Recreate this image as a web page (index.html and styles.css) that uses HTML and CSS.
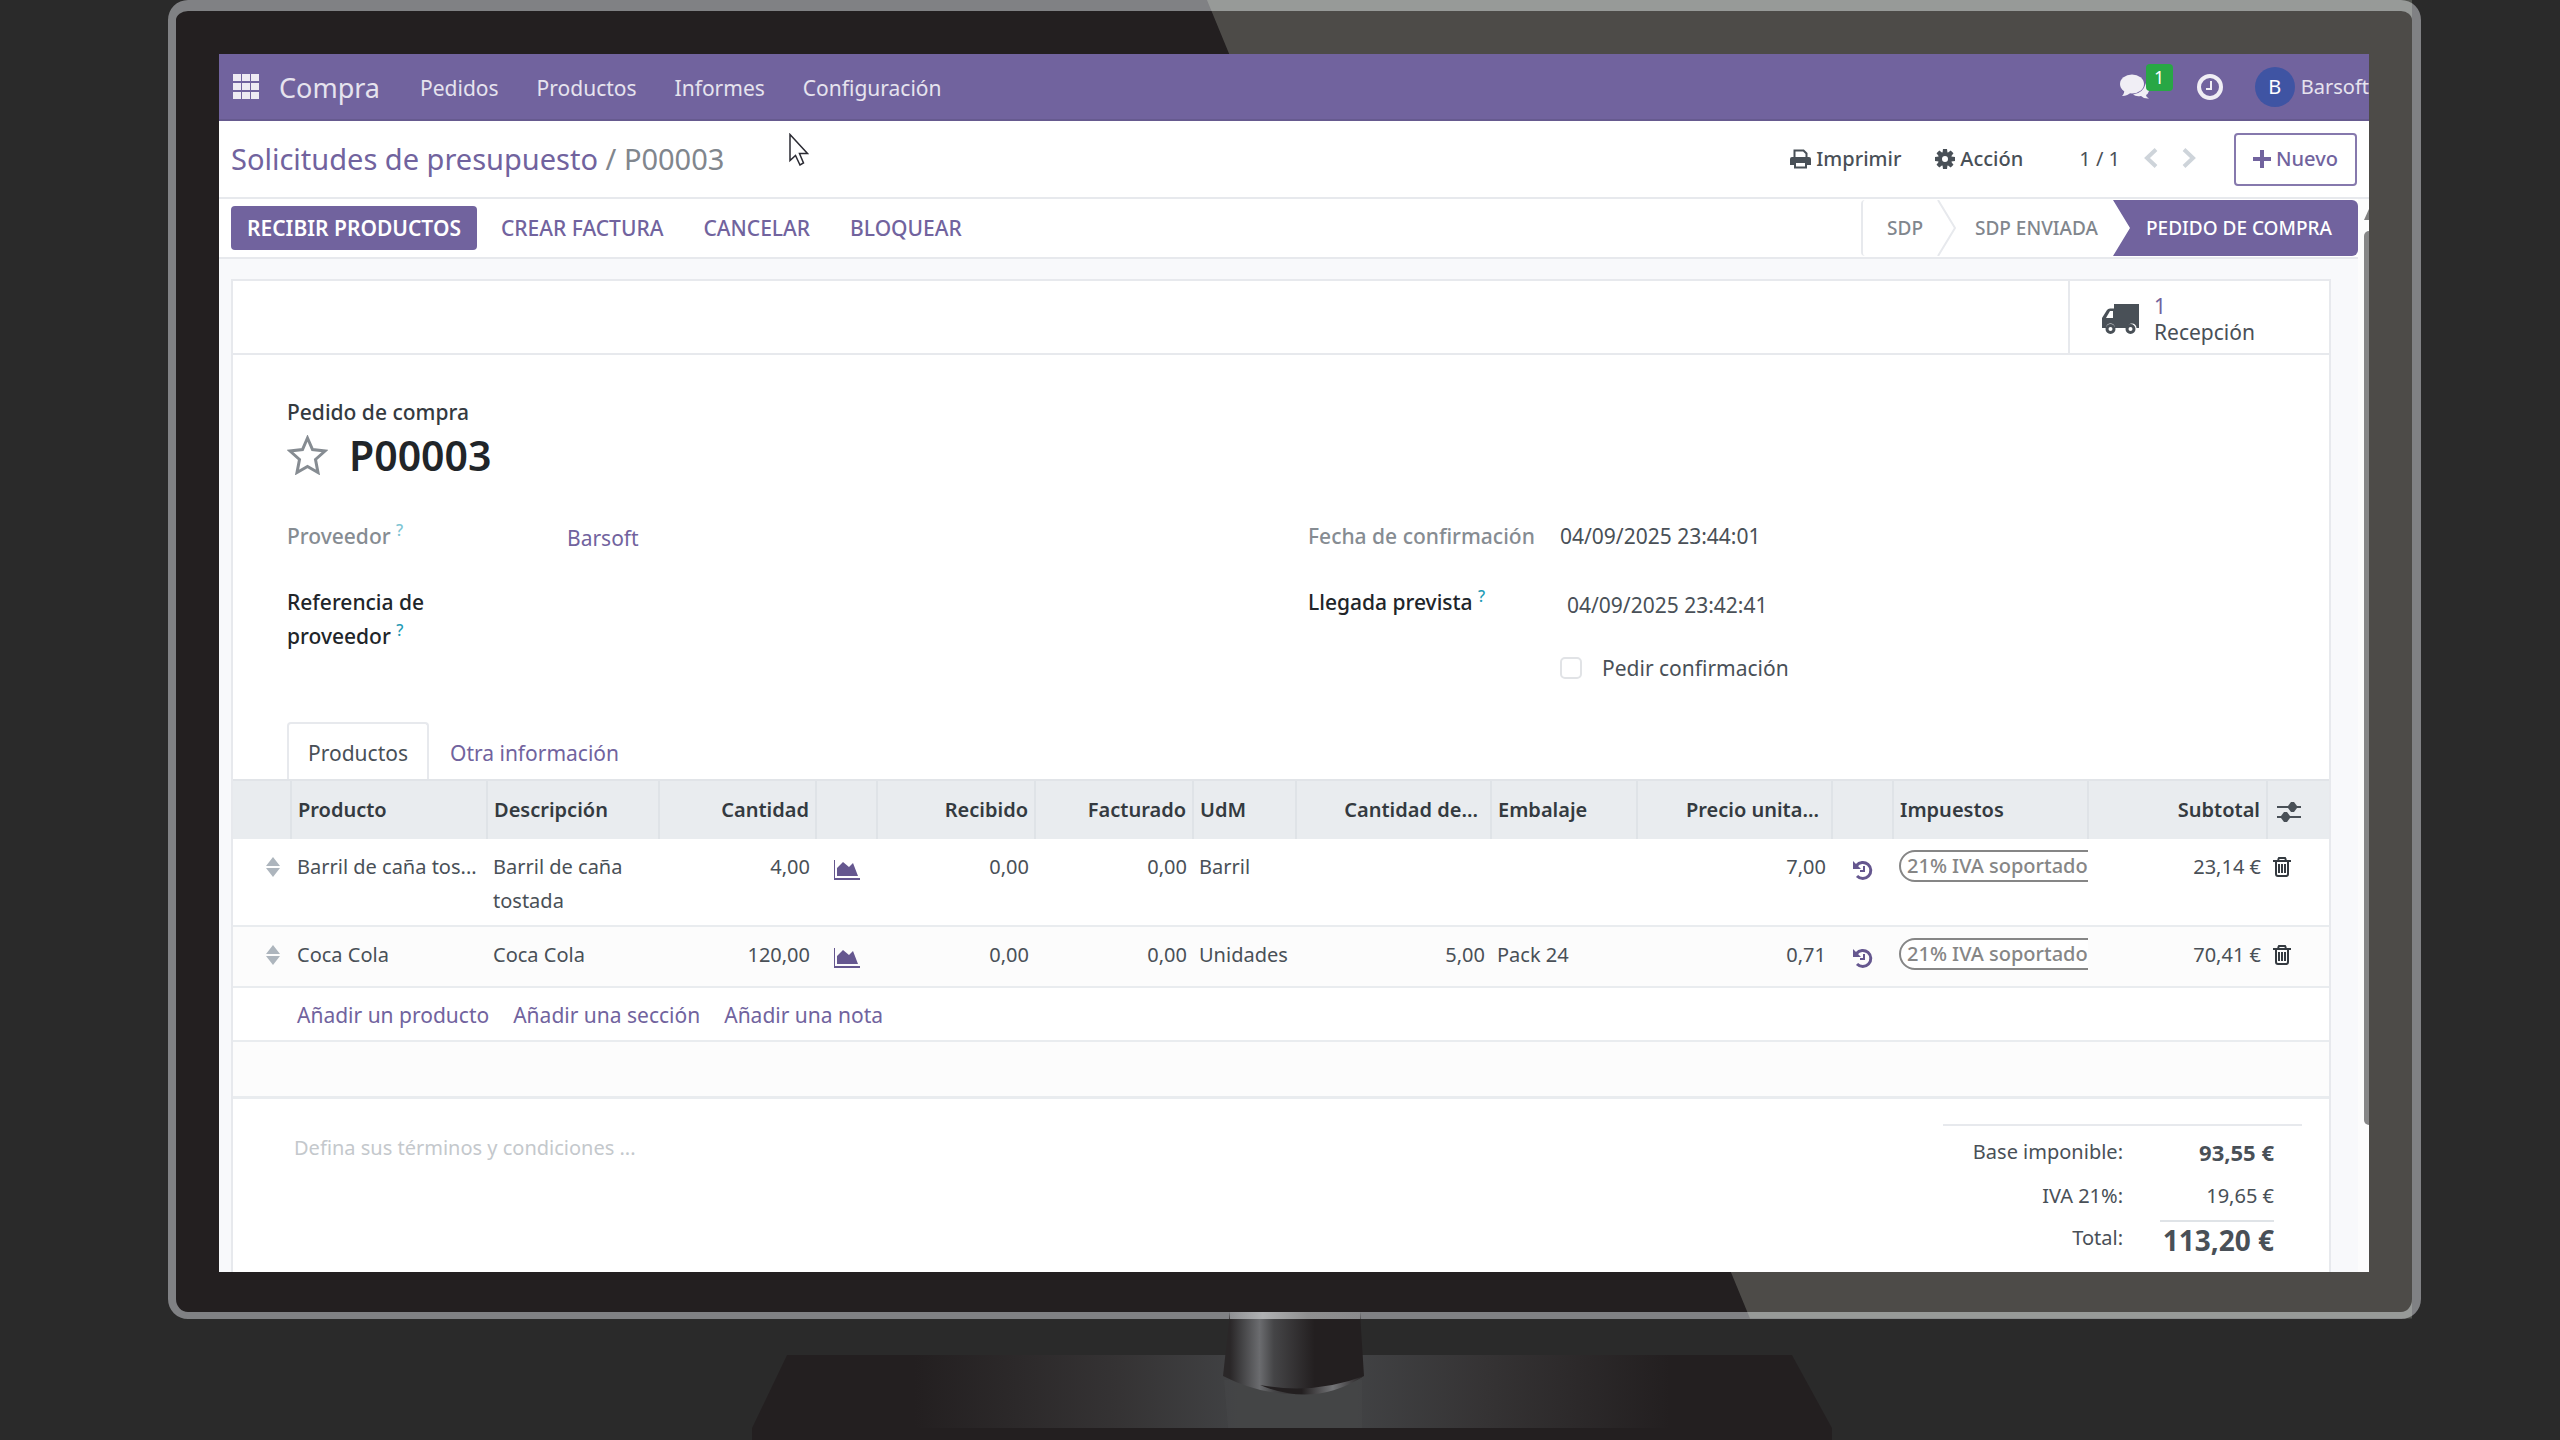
FILE: index.html
```html
<!DOCTYPE html>
<html lang="es">
<head>
<meta charset="utf-8">
<meta name="viewport" content="width=device-width, initial-scale=1">
<title>Compra - P00003</title>
<link rel="stylesheet" href="styles.css">
</head>
<body>
<svg class="sprite" aria-hidden="true">
  <symbol id="i-sort" viewBox="0 0 14 20"><path d="M7 0l7 9H0zM0 11h14l-7 9z"/></symbol>
  <symbol id="i-chart" viewBox="0 0 26 20"><path d="M0 0h1v18h25v2H0z"/><path d="M3 16V8l6-6 6 5 4-4 5 13z"/></symbol>
  <symbol id="i-history" viewBox="0 0 20 20"><path d="M3.500 5.500A8 8 0 1 1 4 16" fill="none" stroke="currentColor" stroke-width="3"/><path d="M0 1v8h8z"/><path d="M11 6v5H7" fill="none" stroke="currentColor" stroke-width="2"/></symbol>
  <symbol id="i-trash" viewBox="0 0 18 20"><path d="M5 3l1-2h6l1 2M0 4h18M3 5v12q0 2 2 2h8q2 0 2-2V5M6 7v9M9 7v9M12 7v9" fill="none" stroke="currentColor" stroke-width="2"/></symbol>
</svg>
<main class="stage">
  <div class="monitor">
    <div class="screen">
      <header class="navbar">
        <button class="apps" type="button" aria-label="Aplicaciones"><svg width="26" height="25" viewBox="0 0 26 25"><path fill="#eeebf3" d="M0 0h8v7H0zM9 0h8v7H9zM18 0h8v7h-8zM0 9h8v7H0zM9 9h8v7H9zM18 9h8v7h-8zM0 18h8v7H0zM9 18h8v7H9zM18 18h8v7h-8z"/></svg></button>
        <a class="brand" href="#">Compra</a>
        <nav class="menu"><a href="#">Pedidos</a><a href="#">Productos</a><a href="#">Informes</a><a href="#">Configuración</a></nav>
        <div class="systray">
          <button type="button" class="chat" aria-label="Conversaciones"><svg width="30" height="25" viewBox="0 0 30 25"><g fill="#f0eef5"><ellipse cx="12" cy="10" rx="12" ry="9.500"/><path d="M4 15q1 4-2 7 6 0 9-4z"/><path d="M26 9q4 3 3 8-1 3-3 4 0 2 3 3.500-5 .5-8-2.500-5 1-8-1.500 10-1 13-11.500z"/></g></svg><span class="count">1</span></button>
          <button type="button" class="clock" aria-label="Actividades"><svg width="26" height="26" viewBox="0 0 26 26" fill="none" stroke="#f0eef5"><circle cx="13" cy="13" r="11" stroke-width="4"/><path d="M14 7v8H9" stroke-width="2"/></svg></button>
          <button type="button" class="user"><span class="avatar">B</span><span>Barsoft</span></button>
        </div>
      </header>
      <div class="control">
        <div class="crumbs"><a href="#">Solicitudes de presupuesto</a><span> / </span><span>P00003</span></div>
        <div class="tools">
          <button type="button" class="tool"><svg width="21" height="20" viewBox="0 0 21 20"><path d="M4.500 9V1.500h9l3 3V9" fill="none" stroke="#495057" stroke-width="2"/><path fill="#495057" d="M2 8h17q2 0 2 2v6h-4v3.500H4V16H0v-6q0-2 2-2z"/><path fill="#fff" d="M6 14h9v3.500H6z"/></svg>Imprimir</button>
          <button type="button" class="tool"><svg width="20" height="20" viewBox="-10 -10 20 20"><g fill="#495057"><path d="M-2-10h4l.5 4h-5zM-2 10h4l.5-4h-5zM-10-2v4l4 .5v-5zM10-2v4l-4 .5v-5z"/><path transform="rotate(45)" d="M-2-10h4l.5 4h-5zM-2 10h4l.5-4h-5zM-10-2v4l4 .5v-5zM10-2v4l-4 .5v-5z"/></g><circle r="5" fill="none" stroke="#495057" stroke-width="4"/></svg>Acción</button>
          <span class="pager">1 / 1</span>
          <button type="button" class="arrow" aria-label="Anterior"><svg width="14" height="20" viewBox="0 0 14 20"><path d="M12 1.500L3 10l9 8.500" fill="none" stroke="#ced4da" stroke-width="4"/></svg></button>
          <button type="button" class="arrow" aria-label="Siguiente"><svg width="14" height="20" viewBox="0 0 14 20"><path d="M2 1.500L11 10l-9 8.500" fill="none" stroke="#ced4da" stroke-width="4"/></svg></button>
          <button type="button" class="new"><svg width="18" height="18" viewBox="0 0 18 18"><path fill="#71639e" d="M7 0h4v7h7v4h-7v7H7v-7H0V7h7z"/></svg>Nuevo</button>
        </div>
      </div>
      <div class="content">
        <div class="form">
          <div class="statusbar">
            <div class="actions">
              <button type="button" class="primary">RECIBIR PRODUCTOS</button>
              <button type="button">CREAR FACTURA</button>
              <button type="button">CANCELAR</button>
              <button type="button">BLOQUEAR</button>
            </div>
            <div class="steps">
              <button type="button" class="step">SDP</button>
              <svg class="sep" width="19" height="56" viewBox="0 0 19 56"><path d="M1 0l17 28L1 56" fill="none" stroke="#e7e9ed" stroke-width="2"/></svg>
              <button type="button" class="step">SDP ENVIADA</button>
              <button type="button" class="step current">PEDIDO DE COMPRA</button>
            </div>
          </div>
          <div class="sheet-bg">
            <section class="sheet">
              <div class="button-box">
                <button type="button" class="stat"><svg width="37" height="30" viewBox="0 0 37 30"><path fill="#495057" d="M12 0h25v24h-2.500a4.500 4.500 0 0 0-9 0H13a4.500 4.500 0 0 0-9 0H0V14l5-8q1-1.500 3-1.500h4z"/><path fill="#fff" d="M4 14l4-7h3v7z"/><g fill="#fff" stroke="#495057" stroke-width="3"><circle cx="8.500" cy="25" r="3.500"/><circle cx="28.500" cy="25" r="3.500"/></g></svg><span class="stat-text"><span class="stat-value">1</span><span>Recepción</span></span></button>
              </div>
              <div class="sheet-body">
                <p class="kind">Pedido de compra</p>
                <div class="title"><button type="button" aria-label="Prioridad"><svg width="41" height="40" viewBox="0 0 41 40"><path d="M20.500 3l5 11.500 12.500 1.500-9.500 8.500L31 37.500l-10.500-6-10.500 6 2.500-13L3 16l12.500-1.500z" fill="none" stroke="#868c92" stroke-width="3"/></svg></button><h1>P00003</h1></div>
                <div class="groups">
                  <div class="group">
                    <span class="label muted">Proveedor <sup>?</sup></span><a class="value" href="#">Barsoft</a>
                    <label class="label narrow" for="ref">Referencia de proveedor <sup>?</sup></label><input id="ref" class="field" type="text">
                  </div>
                  <div class="group dates">
                    <span class="label muted">Fecha de confirmación</span><span>04/09/2025 23:44:01</span>
                    <label class="label" for="arrival">Llegada prevista <sup>?</sup></label><input id="arrival" class="field" type="text" value="04/09/2025 23:42:41">
                    <span class="confirm"><input type="checkbox" id="ask"><label for="ask">Pedir confirmación</label></span>
                  </div>
                </div>
                <div class="tabs"><button type="button" class="active">Productos</button><button type="button">Otra información</button></div>
              </div>
              <table class="lines">
                <colgroup><col class="w58"><col class="w196"><col class="w172"><col class="w157"><col class="w61"><col class="w158"><col class="w158"><col class="w103"><col class="w195"><col class="w146"><col class="w195"><col class="w61"><col class="w195"><col class="w179"><col class="w62"></colgroup>
                <thead><tr><th></th><th>Producto</th><th>Descripción</th><th class="num">Cantidad</th><th></th><th class="num">Recibido</th><th class="num">Facturado</th><th>UdM</th><th class="num cut">Cantidad de...</th><th>Embalaje</th><th class="num cut">Precio unita...</th><th></th><th>Impuestos</th><th class="num">Subtotal</th><th class="options"><button type="button" aria-label="Columnas"><svg width="24" height="20" viewBox="0 0 24 20"><path fill="#495057" d="M0 4h11l3-4h3l3 4h4v2h-4l-3 4h-3l-3-4H0zM0 14h4l3-4h3l3 4h11v2H13l-3 4H7l-3-4H0z"/></svg></button></th></tr></thead>
                <tbody>
                  <tr><td class="handle"><svg width="14" height="20"><use href="#i-sort"/></svg></td><td class="nowrap">Barril de caña tos...</td><td>Barril de caña tostada</td><td class="num">4,00</td><td class="mark"><button type="button" aria-label="Pronóstico"><svg width="26" height="20"><use href="#i-chart"/></svg></button></td><td class="num">0,00</td><td class="num">0,00</td><td>Barril</td><td></td><td></td><td class="num">7,00</td><td class="mark"><button type="button" aria-label="Historial"><svg width="20" height="20"><use href="#i-history"/></svg></button></td><td class="tags"><span class="tag">21% IVA soportado</span></td><td class="num">23,14 €</td><td class="trash"><button type="button" aria-label="Eliminar"><svg width="18" height="20"><use href="#i-trash"/></svg></button></td></tr>
                  <tr class="alt"><td class="handle"><svg width="14" height="20"><use href="#i-sort"/></svg></td><td>Coca Cola</td><td>Coca Cola</td><td class="num">120,00</td><td class="mark"><button type="button" aria-label="Pronóstico"><svg width="26" height="20"><use href="#i-chart"/></svg></button></td><td class="num">0,00</td><td class="num">0,00</td><td>Unidades</td><td class="num">5,00</td><td>Pack 24</td><td class="num">0,71</td><td class="mark"><button type="button" aria-label="Historial"><svg width="20" height="20"><use href="#i-history"/></svg></button></td><td class="tags"><span class="tag">21% IVA soportado</span></td><td class="num">70,41 €</td><td class="trash"><button type="button" aria-label="Eliminar"><svg width="18" height="20"><use href="#i-trash"/></svg></button></td></tr>
                  <tr class="add"><td></td><td colspan="14"><div class="links"><a href="#">Añadir un producto</a><a href="#">Añadir una sección</a><a href="#">Añadir una nota</a></div></td></tr>
                  <tr class="alt blank"><td colspan="15"></td></tr>
                </tbody>
              </table>
              <div class="summary">
                <textarea rows="1" aria-label="Términos y condiciones" placeholder="Defina sus términos y condiciones ..."></textarea>
                <table class="totals">
                  <tr><th>Base imponible:</th><td><strong>93,55 €</strong></td></tr>
                  <tr><th>IVA 21%:</th><td>19,65 €</td></tr>
                  <tr><th>Total:</th><td><span class="grand">113,20 €</span></td></tr>
                </table>
              </div>
            </section>
          </div>
        </div>
        <div class="scrollbar"><svg width="5" height="11" viewBox="0 0 5 11"><path fill="#7f7f7f" d="M5 0v11H0z"/></svg><div class="thumb"></div></div>
      </div>
      <svg class="cursor" width="20" height="33" viewBox="0 0 20 33"><path d="M1 1.500v26l5.500-5 4.500 9.500 3.500-2-4-9.500h8z" fill="#fff" stroke="#2b2b33" stroke-width="1.500"/></svg>
    </div>
  </div>
  <svg class="stand" width="1080" height="128" viewBox="0 0 1080 128" aria-hidden="true">
    <defs>
      <linearGradient id="base"><stop offset="0.15" stop-color="#231f20"/><stop offset="0.34" stop-color="#353334"/><stop offset="0.45" stop-color="#414244"/><stop offset="0.56" stop-color="#414244"/><stop offset="0.68" stop-color="#353334"/><stop offset="0.85" stop-color="#231f20"/></linearGradient>
      <linearGradient id="neck"><stop offset="0.05" stop-color="#2a2728"/><stop offset="0.14" stop-color="#454547"/><stop offset="0.26" stop-color="#6b6c6f"/><stop offset="0.36" stop-color="#454547"/><stop offset="0.65" stop-color="#231f20"/></linearGradient>
      <linearGradient id="rim"><stop offset="0" stop-color="#231f20"/><stop offset="0.4" stop-color="#231f20"/><stop offset="0.7" stop-color="#747578"/><stop offset="1" stop-color="#231f20"/></linearGradient>
      <linearGradient id="joint"><stop offset="0" stop-color="#8f9093"/><stop offset="0.25" stop-color="#b0b1b3"/><stop offset="0.6" stop-color="#8f8f90"/><stop offset="1" stop-color="#8a8a8c"/></linearGradient>
    </defs>
    <path d="M35 43h1005l40 73H0z" fill="url(#base)"/>
    <path d="M0 116h1080v12H0z" fill="#231f20"/>
    <path d="M472 68h138v48H476z" fill="#55565a" opacity=".15"/>
    <path d="M478 0h130l4 64q-70 36-141 0z" fill="url(#neck)"/>
    <path d="M508 73q54 10 104-9-50 32-104 9z" fill="url(#rim)"/>
    <path d="M478 0h130v7H478z" fill="url(#joint)"/>
  </svg>
</main>
</body>
</html>
```
FILE: styles.css
```css
* { box-sizing: border-box; }
body {
  margin: 0;
  background: #2a2a2a;
  color: #495057;
  font: 21px/34px "Noto Sans", "Open Sans", sans-serif;
}
a { color: #71639e; text-decoration: none; }
button { padding: 0; border: 0; background: none; color: inherit; font: inherit; cursor: pointer; }
svg { display: block; flex: none; }
input, textarea { font: inherit; color: inherit; }
.sprite { position: absolute; width: 0; height: 0; }

/* Monitor casing */
.stage { min-height: 100vh; overflow: hidden; display: flex; flex-direction: column; }
.monitor {
  position: relative;
  margin: 0 139px 0 168px;
  padding: 43px 43px 40px;
  border: solid #808184;
  border-width: 11px 9px 7px 8px;
  border-radius: 20px;
  background: #231f20;
}
.monitor::before {
  content: "";
  position: absolute;
  inset: -11px 0 -7px -8px;
  background: rgba(245, 255, 235, .2);
  clip-path: polygon(46.3% 0, 100% 0, 100% 100%, 70.5% 100%);
}
.stand { align-self: center; margin-top: -7px; margin-left: 24px; position: relative; }
.screen { position: relative; overflow: hidden; background: #fff; }

/* Top navigation */
.navbar {
  display: flex; align-items: center;
  height: 67px; padding-left: 14px;
  background: #71639e; border-bottom: 2px solid #665a8f;
  color: #e6e3ee;
}
.navbar a { color: inherit; }
.brand { margin: 0 40px 0 20px; padding-top: 3px; font-size: 27px; }
.menu { display: flex; gap: 38px; padding-top: 2px; }
.systray { display: flex; align-items: center; margin-left: auto; font-size: 20px; }
.chat { position: relative; width: 77px; }
.count {
  position: absolute; left: 26px; top: -10px;
  width: 27px; height: 27px; border-radius: 4px;
  background: #28a745; color: #fff; font-size: 18px; line-height: 27px;
}
.user { display: flex; align-items: center; gap: 6px; margin-left: 32px; white-space: nowrap; }
.avatar { width: 40px; height: 40px; border-radius: 50%; background: #3f54a3; color: #fff; line-height: 40px; }

/* Breadcrumbs and pager */
.control {
  display: flex; align-items: center; justify-content: space-between;
  height: 78px; padding: 0 12px;
  border-bottom: 2px solid #e7e9ed;
}
.crumbs { font-size: 29px; color: #81868d; white-space: pre; }
.tools { display: flex; align-items: center; font-size: 20px; }
.tool { display: flex; align-items: center; gap: 5px; margin-right: 34px; font-weight: 500; }
.pager { margin: 0 24px 0 22px; }
.arrow { margin-right: 24px; padding-bottom: 3px; }
.new {
  display: flex; align-items: center; justify-content: center; gap: 5px;
  width: 123px; height: 53px; margin-left: 14px;
  border: 2px solid #8679ad; border-radius: 4px; color: #71639e; font-weight: 500;
}

/* Status bar */
.content { display: flex; }
.form { flex: 1; min-width: 0; }
.statusbar {
  display: flex; justify-content: space-between; align-items: center;
  height: 60px; padding-left: 12px;
  border-bottom: 2px solid #e7e9ed;
}
.actions { display: flex; gap: 8px; }
.actions button { height: 44px; padding: 0 16px; border-radius: 4px; color: #71639e; font-weight: 500; }
.actions .primary { background: #71639e; color: #fff; font-weight: 600; }
.steps { display: flex; height: 56px; font-size: 19px; border-left: 2px solid #e7e9ed; border-radius: 4px; }
.step { padding: 0 14px 0 24px; color: #81868d; font-weight: 500; }
.sep + .step { padding: 0 15px 0 19px; }
.step.current {
  padding: 0 26px 0 33px;
  background: #71639e; color: #fff;
  border-radius: 0 6px 6px 0;
  clip-path: polygon(0 0, 100% 0, 100% 100%, 0 100%, 17px 50%);
}
.scrollbar { display: flex; flex-direction: column; align-items: flex-end; width: 11px; padding-top: 10px; background: #fcfcfc; }
.thumb { width: 5px; height: 894px; margin-top: 11px; background: #868686; border-radius: 5px 0 0 5px; }

/* Form sheet */
.sheet-bg { padding: 20px 27px 0 12px; background: #f8f9fb; }
.sheet { border: 2px solid #e7e9ed; border-bottom: 0; background: #fff; }
.button-box { display: flex; justify-content: flex-end; height: 74px; border-bottom: 2px solid #e7e9ed; }
.stat { display: flex; align-items: center; gap: 15px; width: 261px; padding: 4px 0 0 32px; border-left: 2px solid #e7e9ed; text-align: left; }
.stat-text { display: grid; line-height: 26px; }
.stat-value { color: #71639e; }
.sheet-body { padding: 40px 54px 0; }
.kind { margin: 0; color: #343a40; font-weight: 500; }
.title { display: flex; align-items: center; gap: 21px; }
h1 { margin: 0; color: #212529; font-size: 41px; line-height: 52px; font-weight: 600; }
.groups { display: grid; grid-template-columns: 1fr 1fr; gap: 54px; margin-top: 38px; }
.group { display: grid; grid-template-columns: 280px 1fr; row-gap: 32px; align-content: start; }
.dates { grid-template-columns: 252px 1fr; }
.label { color: #212529; font-weight: 500; }
.narrow { max-width: 160px; }
.muted { color: #868c92; }
.value { padding-top: 2px; height: 34px; }
sup { color: #1f9bb5; font-size: 16px; line-height: 0; }
.muted sup { color: #7cc4d3; }
.field { width: 100%; height: 34px; padding: 6px 7px 0; border: 0; background: none; }
.confirm { grid-column: 2; display: flex; align-items: center; gap: 20px; }
.confirm input { appearance: none; width: 22px; height: 22px; margin: 0; border: 2px solid #e1e3e6; border-radius: 5px; }
.tabs { display: flex; margin-top: 37px; }
.tabs button { height: 57px; padding: 2px 19px 0; border: 2px solid transparent; border-bottom: 0; color: #71639e; }
.tabs .active { border-color: #e7e9ed; border-radius: 4px 4px 0 0; color: #495057; }

/* Order lines */
.lines { width: 100%; table-layout: fixed; border-collapse: collapse; font-size: 20px; }
.w58 { width: 58px; } .w61 { width: 61px; } .w62 { width: 62px; } .w103 { width: 103px; }
.w146 { width: 146px; } .w157 { width: 157px; } .w158 { width: 158px; } .w172 { width: 172px; }
.w179 { width: 179px; } .w195 { width: 195px; } .w196 { width: 196px; }
.lines th {
  height: 59px; padding: 0 6px;
  background: #e9ecef; border-left: 2px solid #dfe3e7; border-top: 2px solid #e1e4e8;
  color: #343a40; font-weight: 600; text-align: left; white-space: nowrap;
}
.lines th:first-child { border-left: 0; }
.lines td { height: 61px; padding: 11px 6px 7px; border-bottom: 2px solid #e9ecef; vertical-align: top; }
.lines .num { text-align: right; }
.lines .cut { padding-right: 12px; }
.lines .alt { background: #fcfcfc; }
.lines .nowrap { white-space: nowrap; }
.options button { display: block; margin: 3px 0 0 3px; }
.handle svg { margin: 7px 0 0 27px; fill: #adb5bd; }
.mark button { display: block; margin: 10px auto 0; color: #65578f; }
.mark svg, .trash svg { fill: currentColor; }
.trash button { margin-top: 7px; color: #343a40; }
.lines .tags { overflow: hidden; }
.tag {
  display: block; width: 220px; height: 32px; padding-left: 6px;
  border: 2px solid #868686; border-radius: 16px;
  color: #868686; line-height: 28px; white-space: nowrap; background: #fff; font-weight: 500;
}
.lines .add td { height: 54px; padding: 10px 6px 6px; }
.links { display: flex; gap: 24px; font-size: 21px; }
.lines .blank td { height: 56px; border-bottom: 3px solid #e9ecef; }

/* Terms and totals */
.summary { display: flex; justify-content: space-between; padding: 25px 27px 13px 54px; }
textarea { width: 600px; height: 50px; padding: 7px; border: 0; resize: none; background: none; font-size: 20px; }
textarea::placeholder { color: #c4c8cc; opacity: 1; }
.totals { width: 359px; border-top: 2px solid #e7e9ed; border-spacing: 0; padding: 5px 28px 0 0; font-size: 20px; }
.totals th { height: 42px; padding: 0; font-weight: 400; text-align: right; vertical-align: top; line-height: 42px; }
.totals td { width: 151px; padding: 0 0 0 37px; text-align: right; vertical-align: top; line-height: 42px; white-space: nowrap; }
.totals strong { font-size: 22px; }
.grand { display: block; margin-top: 3px; border-top: 2px solid #dfe3e7; font-size: 28px; font-weight: 700; line-height: 36px; }

.cursor { position: absolute; left: 570px; top: 79px; }
```
